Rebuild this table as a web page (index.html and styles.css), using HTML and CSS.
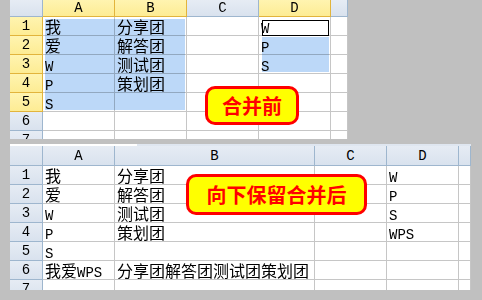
FILE: index.html
```html
<!DOCTYPE html>
<html lang="zh">
<head>
<meta charset="utf-8">
<link rel="stylesheet" href="styles.css">
</head>
<body>
<div class="screen">
  <div class="sheet sheet-top">
    <div class="grid g1">
      <div class="hd"></div><div class="hd hs">A</div><div class="hd hs">B</div><div class="hd">C</div><div class="hd hs">D</div><div class="hd"></div>

      <div class="rh rs">1</div><div class="c">我</div><div class="c">分享团</div><div class="c"></div><div class="c"><span class="en">W</span></div><div class="c"></div>
      <div class="rh rs">2</div><div class="c">爱</div><div class="c">解答团</div><div class="c"></div><div class="c"><span class="en">P</span></div><div class="c"></div>
      <div class="rh rs">3</div><div class="c"><span class="en">W</span></div><div class="c">测试团</div><div class="c"></div><div class="c"><span class="en">S</span></div><div class="c"></div>
      <div class="rh rs">4</div><div class="c"><span class="en">P</span></div><div class="c">策划团</div><div class="c"></div><div class="c"></div><div class="c"></div>
      <div class="rh rs">5</div><div class="c"><span class="en">S</span></div><div class="c"></div><div class="c"></div><div class="c"></div><div class="c"></div>
      <div class="rh">6</div><div class="c"></div><div class="c"></div><div class="c"></div><div class="c"></div><div class="c"></div>
      <div class="rh">7</div><div class="c"></div><div class="c"></div><div class="c"></div><div class="c"></div><div class="c"></div>
    </div>
    <div class="sel sel-ab"></div>
    <div class="sel sel-d"></div>
    <div class="active-cell"></div>
    <div class="callout callout-1">合并前</div>
  </div>

  <div class="sheet sheet-bottom">
    <div class="strip"></div>
    <div class="grid g2">
      <div class="hd"></div><div class="hd">A</div><div class="hd">B</div><div class="hd">C</div><div class="hd">D</div><div class="hd"></div>

      <div class="rh">1</div><div class="c">我</div><div class="c">分享团</div><div class="c"></div><div class="c"><span class="en">W</span></div><div class="c"></div>
      <div class="rh">2</div><div class="c">爱</div><div class="c">解答团</div><div class="c"></div><div class="c"><span class="en">P</span></div><div class="c"></div>
      <div class="rh">3</div><div class="c"><span class="en">W</span></div><div class="c">测试团</div><div class="c"></div><div class="c"><span class="en">S</span></div><div class="c"></div>
      <div class="rh">4</div><div class="c"><span class="en">P</span></div><div class="c">策划团</div><div class="c"></div><div class="c"><span class="en">WPS</span></div><div class="c"></div>
      <div class="rh">5</div><div class="c"><span class="en">S</span></div><div class="c"></div><div class="c"></div><div class="c"></div><div class="c"></div>
      <div class="rh">6</div><div class="c">我爱<span class="en">WPS</span></div><div class="c">分享团解答团测试团策划团</div><div class="c"></div><div class="c"></div><div class="c"></div>
      <div class="rh">7</div><div class="c"></div><div class="c"></div><div class="c"></div><div class="c"></div><div class="c"></div>
    </div>
    <div class="callout callout-2">向下保留合并后</div>
  </div>
</div>
</body>
</html>
```

FILE: styles.css
```css
html, body {
  margin: 0;
  padding: 0;
  background: #c0c0c0;
}

.screen {
  width: 482px;
  height: 300px;
  overflow: hidden;
  padding-left: 10px;
  box-sizing: border-box;
}

.sheet {
  position: relative;
  overflow: hidden;
  background: #ffffff;
}

.sheet-top {
  width: 338px;
  height: 139px;
}

.sheet-bottom {
  width: 461px;
  height: 146px;
  margin-top: 5px;
}

.strip {
  height: 2px;
  background: linear-gradient(to right, #ffffff 0, #ffffff 127px, #dfe6f0 127px);
}

.grid {
  display: grid;
}

.g1 {
  grid-template-columns: 33px 72px 72px 72px 72px 17px;
  grid-template-rows: 17px repeat(7, 19px);
}

.g2 {
  grid-template-columns: 33px 72px 200px 72px 72px 12px;
  grid-template-rows: 20px repeat(7, 19px);
}

.grid > div {
  box-sizing: border-box;
  overflow: hidden;
  white-space: nowrap;
}

.c {
  background: #ffffff;
  border-right: 1px solid #c6c6c6;
  border-bottom: 1px solid #c6c6c6;
  padding-left: 2px;
  font-family: "Noto Sans CJK SC", sans-serif;
  font-size: 16px;
  line-height: 18px;
  color: #000000;
}

.en {
  font-family: "Liberation Mono", monospace;
  font-size: 14px;
}

.hd, .rh {
  background: linear-gradient(#e6ecf4, #d9e2ee);
  border-right: 1px solid #9eb6ce;
  border-bottom: 1px solid #9eb6ce;
  text-align: center;
  font-family: "Liberation Mono", monospace;
  font-size: 14px;
  color: #000000;
}

.g1 .hd {
  line-height: 17px;
}

.g2 .hd {
  line-height: 20px;
}

.rh {
  line-height: 19px;
}

.hd.hs, .rh.rs {
  background: linear-gradient(#fff4b0, #fdec94);
  border-right-color: #e2b43c;
  border-bottom-color: #e2b43c;
}

.sel {
  position: absolute;
  background: #bcd8f8;
  mix-blend-mode: multiply;
}

.sel-ab {
  left: 35px;
  top: 19px;
  width: 140px;
  height: 91px;
}

.sel-d {
  left: 252px;
  top: 37px;
  width: 67px;
  height: 35px;
}

.active-cell {
  position: absolute;
  left: 252px;
  top: 20px;
  width: 67px;
  height: 16px;
  box-sizing: border-box;
  border: 1px solid #000000;
}

.callout {
  position: absolute;
  box-sizing: border-box;
  border: 3px solid #ff0000;
  border-radius: 10px;
  background: #ffff00;
  color: #ff0000;
  font-family: "Noto Sans CJK SC", sans-serif;
  font-weight: 700;
  font-size: 20px;
  line-height: 1;
  display: flex;
  align-items: center;
  justify-content: center;
}

.callout-1 {
  left: 195px;
  top: 86px;
  width: 94px;
  height: 39px;
}

.callout-2 {
  left: 176px;
  top: 30px;
  width: 181px;
  height: 41px;
}
```
